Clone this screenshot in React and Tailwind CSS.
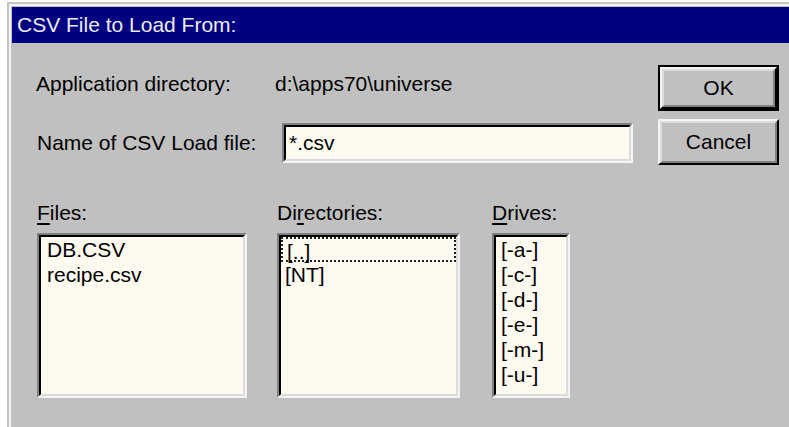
const font = { fontFamily: '"Liberation Sans", Arial, sans-serif' };

// Win95-style sunken well (list boxes, edit field)
function Sunken({ className = "", children }) {
	return (
		<div className={`border-2 border-t-[#808080] border-l-[#808080] border-b-[#f4f4f4] border-r-[#f4f4f4] ${className}`}>
			<div className="h-full w-full border-2 border-t-black border-l-black border-b-[#dcdcdc] border-r-[#dcdcdc] bg-[#fffaf0] overflow-hidden">
				{children}
			</div>
		</div>
	);
}

function Button({ label, isDefault }) {
	const face = (
		<div className="h-full w-full border-2 border-t-[#f4f4f4] border-l-[#f4f4f4] border-b-black border-r-black">
			<div className="h-full w-full border-2 border-t-[#dcdcdc] border-l-[#dcdcdc] border-b-[#808080] border-r-[#808080] flex items-center justify-center text-[21px] text-black">
				{label}
			</div>
		</div>
	);
	if (isDefault) {
		return <div className="h-[46px] w-[121px] border-2 border-black">{face}</div>;
	}
	return <div className="h-[46px] w-[121px]">{face}</div>;
}

function ListBox({ width, items, focused, padLeft = "pl-[6px]" }) {
	return (
		<Sunken className={`${width} h-[165px]`}>
			<div className="flex flex-col">
				{items.map((it, i) => (
					<div
						key={it}
						className={`h-[25px] leading-[25px] text-[21px] text-black whitespace-nowrap ${
							focused === i ? "border-2 border-dotted border-[#222] leading-[21px] pl-[4px]" : padLeft
						}`}
					>
						{it}
					</div>
				))}
			</div>
		</Sunken>
	);
}

export default function App() {
	return (
		<div className="w-[789px] h-[427px] overflow-hidden bg-white pl-[7px] pt-[2px]" style={font}>
			<div className="h-full border-l-2 border-t-2 border-[#c4c4c4]">
				<div className="h-full border-l-2 border-t-2 border-[#f4f4f4]">
					<div className="h-full bg-[#c0c0c0] pl-[1px] pt-[1px] flex flex-col">
						{/* title bar */}
						<div className="h-[36px] bg-[#000080] flex items-center pl-[5px] text-[21px] text-[#ececec]">
							CSV File to Load From:
						</div>

						<div className="flex flex-1">
							<div className="w-[646px] pl-[24px] pt-[21px] flex flex-col">
								<div className="h-[40px] flex items-center text-[21px] text-black">
									<span className="w-[239px]">Application directory:</span>
									<span>d:\apps70\universe</span>
								</div>
								<div className="mt-[19px] h-[40px] flex items-center text-[21px] text-black">
									<span className="w-[246px] pl-[1px]">Name of CSV Load file:</span>
									<Sunken className="w-[351px] h-[40px]">
										<div className="h-full flex items-center pl-[3px]">*.csv</div>
									</Sunken>
								</div>

								<div className="mt-[38px] flex pl-[1px] gap-[30px] text-[21px] text-black">
									<div className="flex flex-col">
										<div className="h-[24px] leading-[24px]">
											<u className="underline-offset-[3px]">F</u>iles:
										</div>
										<div className="mt-[8px]">
											<ListBox width="w-[210px]" items={["DB.CSV", "recipe.csv"]} />
										</div>
									</div>
									<div className="flex flex-col">
										<div className="h-[24px] leading-[24px]">
											Di<u className="underline-offset-[3px]">r</u>ectories:
										</div>
										<div className="mt-[8px]">
											<ListBox width="w-[183px]" items={["[..]", "[NT]"]} focused={0} padLeft="pl-[4px]" />
										</div>
									</div>
									<div className="flex flex-col ml-[2px]">
										<div className="h-[24px] leading-[24px]">
											<u className="underline-offset-[3px]">D</u>rives:
										</div>
										<div className="mt-[8px]">
											<ListBox
												width="w-[78px]"
												items={["[-a-]", "[-c-]", "[-d-]", "[-e-]", "[-m-]", "[-u-]"]}
												padLeft="pl-[5px]"
											/>
										</div>
									</div>
								</div>
							</div>

							<div className="w-[121px] pt-[22px] flex flex-col gap-[8px]">
								<Button label="OK" isDefault />
								<Button label="Cancel" />
							</div>
						</div>
					</div>
				</div>
			</div>
		</div>
	);
}
